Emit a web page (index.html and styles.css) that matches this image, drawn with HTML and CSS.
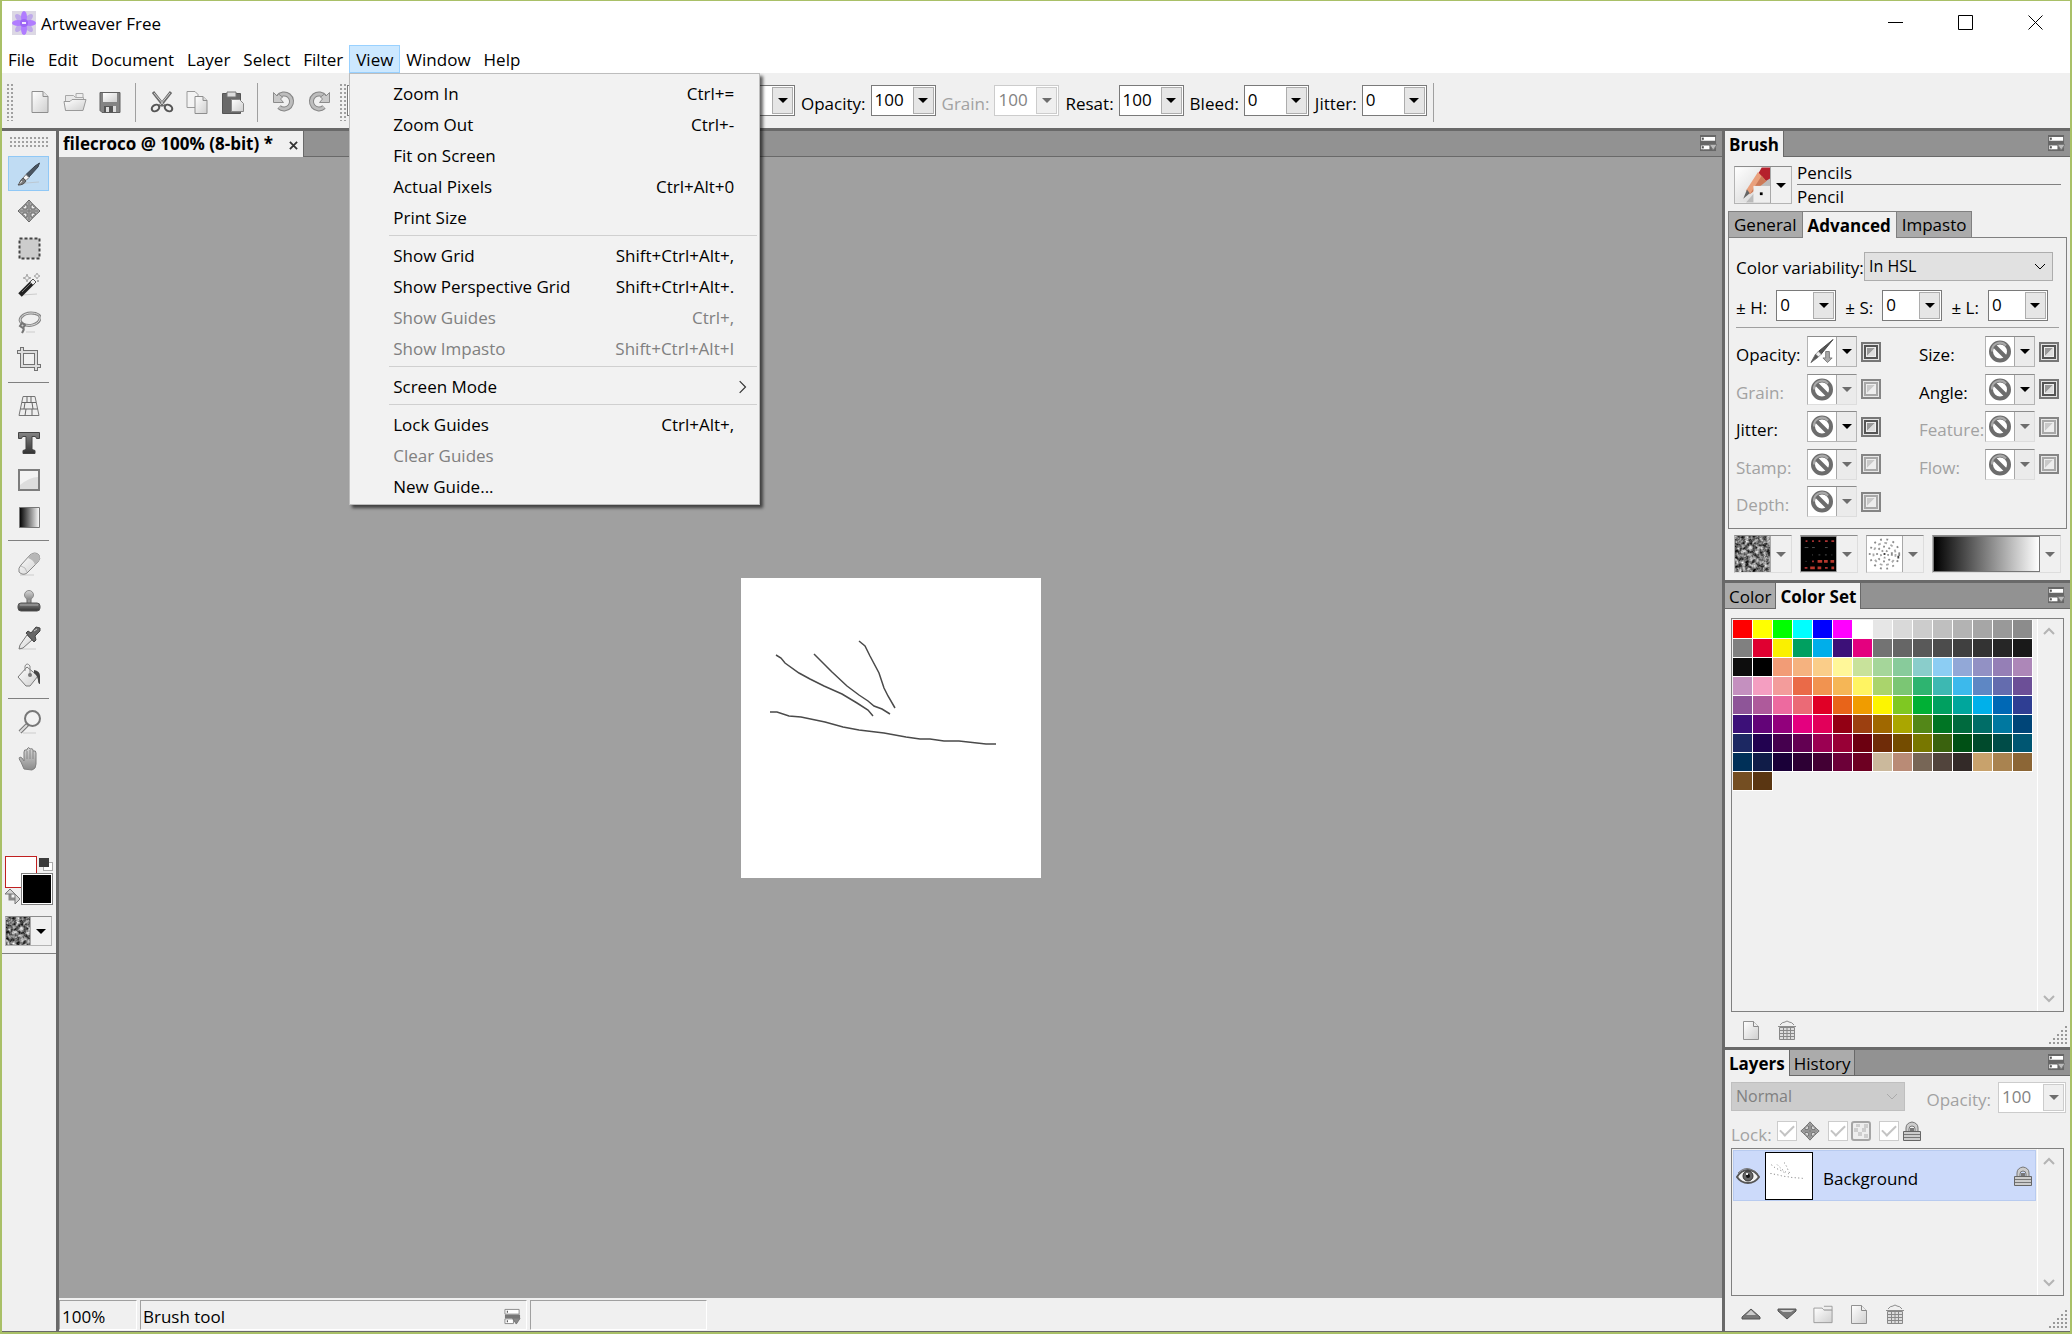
FILE: index.html
```html
<!DOCTYPE html>
<html lang="en">
<head>
    <meta charset="UTF-8">
    <meta name="viewport" content="width=device-width, initial-scale=1.0">
    <title>Artweaver Free</title>
    <link rel="stylesheet" href="styles.css">
</head>
<body>

    <!-- Shared icons -->
    <svg class="defs" aria-hidden="true">
        <defs>
            <linearGradient id="light" x1="0" y1="0" x2="1" y2="1"><stop offset="0" stop-color="#fff"/><stop offset="1" stop-color="#cfcfcf"/></linearGradient>
            <linearGradient id="mid" x1="0" y1="0" x2="0" y2="1"><stop offset="0" stop-color="#d8d8d8"/><stop offset="1" stop-color="#8a8a8a"/></linearGradient>
            <linearGradient id="dark" x1="0" y1="0" x2="0" y2="1"><stop offset="0" stop-color="#858585"/><stop offset="1" stop-color="#333"/></linearGradient>
            <linearGradient id="ramp"><stop offset="0" stop-color="#000"/><stop offset="1" stop-color="#fff"/></linearGradient>
            <filter id="noise" x="0" y="0" width="1" height="1" color-interpolation-filters="sRGB">
                <feTurbulence type="fractalNoise" baseFrequency="0.28" numOctaves="3" seed="4"/>
                <feColorMatrix values="1.4 0 0 0 -0.23  1.4 0 0 0 -0.23  1.4 0 0 0 -0.23  0 0 0 0 1"/>
            </filter>
        </defs>
        <symbol id="i-new" viewBox="0 0 24 24">
            <path d="M4 1.5h11l5 5v16H4z" fill="url(#light)" stroke="#8e8e8e"/>
            <path d="M15 1.5v5h5" fill="#e2e2e2" stroke="#8e8e8e"/>
        </symbol>
        <symbol id="i-open" viewBox="0 0 24 24">
            <path d="M2.500 20.500v-15h8l2 2h8v4" fill="#e8e8e8" stroke="#a8a8a8"/>
            <path d="M13 3.500h7v4h-7z" fill="#eee" stroke="#aaa"/>
            <path d="M1 11.500h6l2-2h14l-3 11H2.500z" fill="url(#light)" stroke="#9a9a9a"/>
        </symbol>
        <symbol id="i-save" viewBox="0 0 24 24">
            <path d="M2 2.500h20v20H4l-2-2z" fill="#848484" stroke="#606060"/>
            <path d="M5 3h14v9H5z" fill="url(#light)"/>
            <path d="M6 16h12v6.500H6z" fill="#555"/>
            <path d="M8 17h3v5H8zM15 16h3v6h-3z" fill="#ddd"/>
        </symbol>
        <symbol id="i-cut" viewBox="0 0 24 24">
            <path d="M3 2l11 14M21 2L10 16" stroke="#6b6b6b" stroke-width="3"/>
            <path d="M4 3l10 12M20 3L10 15" stroke="#d0d0d0"/>
            <ellipse cx="5.500" cy="18" rx="4" ry="3" transform="rotate(-30 5.500 18)" fill="#eee" stroke="#555" stroke-width="2"/>
            <ellipse cx="18.500" cy="18" rx="4" ry="3" transform="rotate(30 18.500 18)" fill="#eee" stroke="#555" stroke-width="2"/>
        </symbol>
        <symbol id="i-copy" viewBox="0 0 24 24">
            <path d="M2 1.500h8l3 3v13H2z" fill="#f4f4f4" stroke="#9a9a9a"/>
            <path d="M10 6.500h8l4 4v13H10z" fill="url(#light)" stroke="#8e8e8e"/>
            <path d="M18 6.500v4h4" fill="#ddd" stroke="#8e8e8e"/>
        </symbol>
        <symbol id="i-paste" viewBox="0 0 24 24">
            <path d="M2.500 3.500h18v20h-18z" fill="#696969" stroke="#555"/>
            <path d="M7 2h9v5H7z" fill="#ddd" stroke="#777"/>
            <path d="M11.500 9.500h8l4 4v8h-12z" fill="url(#light)" stroke="#888"/>
        </symbol>
        <symbol id="i-undo" viewBox="0 0 24 24">
            <path d="M6 7a7.500 7.500 0 1 1 1 10" fill="none" stroke="#858585" stroke-width="5"/>
            <path d="M6 7a7.500 7.500 0 1 1 1 10" fill="none" stroke="#bdbdbd" stroke-width="3"/>
            <path d="M1.500 2.500v10h10l-3-3.500 2-2-4-3-1.500 2z" fill="#c9c9c9" stroke="#8b8b8b"/>
        </symbol>
        <symbol id="i-brush" viewBox="0 0 24 24">
            <path d="M2 23l7-2 13-1" stroke="#bcc8d2" fill="none"/>
            <path d="M22.500 1L21 5 12 15l-3-2.500L18 4z" fill="#4a5560" stroke="#384450"/>
            <path d="M9 12.500l3 3-3 3-3-2.500z" fill="#f8f8f8" stroke="#777"/>
            <path d="M6 16l3 3c-2 3-4 4-8 4 2-2 2-5 5-7z" fill="#777" stroke="#555"/>
            <path d="M5 19l-2 2.500" stroke="#eee"/>
        </symbol>
        <symbol id="i-move" viewBox="0 0 24 24">
            <path d="M12 1l4.500 5h-2.500v4h4V7.500l5 4.500-5 4.500V14h-4v4h2.500L12 23l-4.500-5H10v-4H6v2.500L1 12l5-4.500V10h4V6H7.500z" fill="#aaa" stroke="#626262"/>
            <path d="M6 6h2v2H6zM16 6h2v2h-2zM6 16h2v2H6zM16 16h2v2h-2z" fill="#898989"/>
            <path d="M12 3v18M3 12h18" stroke="#777"/>
        </symbol>
        <symbol id="i-marquee" viewBox="0 0 24 24">
            <path d="M2.500 2.500h20v20h-20z" fill="#ccc" stroke="#444" stroke-width="2" stroke-dasharray="3 2"/>
        </symbol>
        <symbol id="i-wand" viewBox="0 0 24 24">
            <path d="M5 22l15-1" stroke="#ccc"/>
            <path d="M3 22L16 9" stroke="#222" stroke-width="5"/>
            <path d="M13 9l3 3 3-3-3-3z" fill="#eee" stroke="#555"/>
            <path d="M5 19L14 10" stroke="#777"/>
            <path d="M10 1l1 3 3 1-3 1-1 3-1-3-3-1 3-1zM20 0l1 2 2 1-2 1-1 2-1-2-2-1 2-1zM21 7l1 1-1 1-1-1z" fill="#eee" stroke="#aaa"/>
        </symbol>
        <symbol id="i-lasso" viewBox="0 0 24 24">
            <path d="M6 14C-1 10 6 3 14 3c7 0 10 3 9 6-2 6-11 8-17 5z" fill="none" stroke="#868686" stroke-width="3"/>
            <path d="M6 14C-1 10 6 3 14 3c7 0 10 3 9 6-2 6-11 8-17 5z" fill="none" stroke="#ddd"/>
            <path d="M5 13l-2 3 3 2 2-3zM6 17c2 3 0 4-1 6" fill="#ccc" stroke="#777" stroke-width="2"/>
            <path d="M9 22h9" stroke="#ccc"/>
        </symbol>
        <symbol id="i-crop" viewBox="0 0 24 24">
            <path d="M0 5h19v19M5 0v19h19" fill="none" stroke="#727272" stroke-width="4"/>
            <path d="M1 5h18v18M5 1v18h18" fill="none" stroke="#ddd" stroke-width="2"/>
        </symbol>
        <symbol id="i-persp" viewBox="0 0 24 24">
            <path d="M6 2.500h12l4 19H2z" fill="#eee" stroke="#777"/>
            <path d="M5 8.500h14M3.500 15h17M10 2.500v6M14 2.500v6M8 8.500L7 15M15 8.500l1 6.500M9 15l-1 6.500M15 15v6.500" stroke="#666" fill="none"/>
        </symbol>
        <symbol id="i-type" viewBox="0 0 24 24">
            <path d="M1.500 1.500h21v6h-3l-1-2H15v13l3 1v3H6v-3l3-1v-13H5.500l-1 2h-3z" fill="url(#dark)" stroke="#444"/>
        </symbol>
        <symbol id="i-shape" viewBox="0 0 24 24">
            <path d="M2 2h20v20H2z" fill="#f3f3f3" stroke="#7d7d7d" stroke-width="2"/>
            <path d="M3 17q10-8 18-8v12H3z" fill="#ddd"/>
        </symbol>
        <symbol id="i-gradient" viewBox="0 0 24 24">
            <path d="M2.500 2.500h20v20h-20z" fill="url(#ramp)" stroke="#777"/>
        </symbol>
        <symbol id="i-eraser" viewBox="0 0 24 24">
            <path d="M3 23h14" stroke="#ccc"/>
            <path d="M13 3q5-4 9 0 2 4-1 7L10 21q-4 3-8-1-1-4 2-7z" fill="url(#light)" stroke="#888"/>
            <path d="M12 4q6-5 10-1 2 4-1 7l-3 3q-1-5-7-7z" fill="#b7b7b7"/>
            <path d="M4 14q5 1 6 6" stroke="#bbb" fill="none"/>
        </symbol>
        <symbol id="i-stamp" viewBox="0 0 24 24">
            <path d="M10 9h4v7h-4z" fill="#999" stroke="#666"/>
            <circle cx="12" cy="6" r="4.500" fill="url(#mid)" stroke="#8d8d8d"/>
            <rect x="1" y="14" width="22" height="8" rx="3" fill="url(#dark)" stroke="#555"/>
            <path d="M3 16h18" stroke="#aaa"/>
        </symbol>
        <symbol id="i-dropper" viewBox="0 0 24 24">
            <path d="M3 23h16" stroke="#ccc"/>
            <path d="M10 9l5 5-9 8-4 1 1-4z" fill="url(#light)" stroke="#777"/>
            <path d="M9 7l2-2 3 2 5-6 4 1v3l-5 5 1 4-2 2z" fill="#666" stroke="#444"/>
            <path d="M17 5l3-2" stroke="#ccc"/>
        </symbol>
        <symbol id="i-bucket" viewBox="0 0 24 24">
            <path d="M10 4l11 9-8 10h-4l-8-9z" fill="url(#light)" stroke="#7a7a7a"/>
            <path d="M8 8V3q2-4 5 0v9" fill="none" stroke="#888"/>
            <path d="M17 7q6 1 6 6v8q-2 0-2-4-1-5-4-7z" fill="#444"/>
            <circle cx="13" cy="12" r="2" fill="#777"/>
        </symbol>
        <symbol id="i-zoom" viewBox="0 0 24 24">
            <path d="M6 23h13" stroke="#ccc"/>
            <path d="M3 22l8-8" stroke="#777" stroke-width="4"/>
            <path d="M3 22l7-7" stroke="#ddd" stroke-width="2"/>
            <circle cx="15.500" cy="8.500" r="7.500" fill="#f2f2f2" stroke="#777" stroke-width="2"/>
        </symbol>
        <symbol id="i-hand" viewBox="0 0 24 24">
            <path d="M7 22L4 15q-3-4-1-5 2 0 4 4V5q0-3 3-2v-1q2-3 3 0 3-1 3 1v1q3-1 3 2v11q0 5-4 6z" fill="url(#mid)" stroke="#7f7f7f"/>
            <path d="M10 4v8M13 3v9M16 4v8" stroke="#888"/>
        </symbol>
        <symbol id="i-swap" viewBox="0 0 16 16">
            <path d="M5 3v7h6" fill="none" stroke="#888" stroke-width="3"/>
            <path d="M0 5l5-5 5 5zM10 5v10l5-5z" fill="#d2d2d2" stroke="#777"/>
        </symbol>
        <symbol id="i-options" viewBox="0 0 18 18">
            <path d="M0 0h17v17H0z" fill="#676767"/>
            <path d="M3 2h13v4H3zM3 11h7v4H3z" fill="#fff"/>
            <path d="M1 2h3v4H1zM1 11h3v4H1z" fill="#ddd"/>
            <path d="M2 3h2v2H2zM2 12h2v2H2z" fill="#555"/>
            <path d="M10 10h8l-4 6z" fill="#bbb" stroke="#777"/>
        </symbol>
        <symbol id="i-options-flat" viewBox="0 0 18 18">
            <path d="M1 1.500h15v5H1zM1 11.500h9v5H1z" fill="#fff" stroke="#888"/>
            <path d="M1 7h16v4H1z" fill="#777"/>
            <path d="M3 3h1v2H3zM3 13h1v2H3z" fill="#333"/>
            <path d="M9 11h8l-4 6z" fill="#888" stroke="#777"/>
        </symbol>
        <symbol id="i-none" viewBox="0 0 24 24">
            <circle cx="12" cy="12" r="9" fill="none" stroke="#6d6d6d" stroke-width="4"/>
            <path d="M6 6l12 12" stroke="#6d6d6d" stroke-width="4"/>
            <path d="M4 12a8 8 0 0 1 14-6" fill="none" stroke="#a8a8a8" stroke-width="2"/>
        </symbol>
        <symbol id="i-pressure" viewBox="0 0 26 26">
            <path d="M25 0L12 16l-3-3z" fill="#555" stroke="#444"/>
            <path d="M9 13l3 3-3 3-3-3z" fill="#eee" stroke="#999"/>
            <path d="M6 16l3 3-8 6z" fill="#555" stroke="#666"/>
            <path d="M17 13h4v7h3l-5 5-5-5h3z" fill="#aaa" stroke="#777"/>
        </symbol>
        <symbol id="i-invert" viewBox="0 0 20 20">
            <path d="M1 1h18v18H1z" fill="#e4e4e4" stroke="#777" stroke-width="2"/>
            <path d="M4 4h12v12H4z" fill="#eee" stroke="#555" stroke-width="2"/>
            <path d="M6 6h8l-8 8z" fill="#999"/>
            <path d="M14 6v8H6z" fill="#ddd"/>
        </symbol>
        <symbol id="i-invert-off" viewBox="0 0 20 20">
            <path d="M1 1h18v18H1z" fill="#e8e8e8" stroke="#858585" stroke-width="2"/>
            <path d="M4 4h12v12H4z" fill="#eee" stroke="#a8a8a8" stroke-width="2"/>
            <path d="M6 6h8l-8 8z" fill="#c9c9c9"/>
            <path d="M14 6v8H6z" fill="#eee"/>
        </symbol>
        <symbol id="i-page" viewBox="0 0 20 20">
            <path d="M2.500 1.500h10l5 5v13h-15z" fill="url(#light)" stroke="#929292"/>
            <path d="M12.500 1.500v5h5" fill="#eee" stroke="#888"/>
        </symbol>
        <symbol id="i-trash" viewBox="0 0 20 20">
            <path d="M2.500 7.500h15v12h-15z" fill="#ddd" stroke="#888"/>
            <path d="M1 6.500h18M3 5q2-3 5-3 2-2 4 0 3 0 5 3" fill="none" stroke="#8d8d8d"/>
            <path d="M2 10.500h16M2 13.500h16M2 16.500h16M6.500 7v12M10 7v12M13.500 7v12" stroke="#888"/>
        </symbol>
        <symbol id="i-folder" viewBox="0 0 22 20">
            <path d="M1 3.500h9l2 2h9v14H1z" fill="url(#light)" stroke="#979797"/>
            <path d="M12 1.500h9v4h-9" fill="#eee" stroke="#999"/>
        </symbol>
        <symbol id="i-lock" viewBox="0 0 20 20">
            <path d="M4 11V7q0-5 6-6 6 1 6 6v4h-3V8q0-3-3-3T7 8v3z" fill="#ccc" stroke="#777"/>
            <path d="M1.500 10.500h17v9h-17z" fill="#ccc" stroke="#666"/>
            <path d="M2 13.500h16M2 16.500h16" stroke="#777"/>
            <path d="M8 7h4v3H8z" fill="#777"/>
        </symbol>
        <symbol id="i-checker" viewBox="0 0 20 20">
            <rect x="1" y="1" width="18" height="18" rx="2" fill="#eee" stroke="#a5a5a5" stroke-width="2"/>
            <path d="M3 7h4v4H3zM7 11h4v4H7zM11 7h4v4h-4zM13 3h4v4h-4zM13 13h4v4h-4zM5 3h4v3H5z" fill="#cecece"/>
        </symbol>
        <symbol id="i-eye" viewBox="0 0 24 16">
            <path d="M1 9Q5 2 12 2t11 7q-4 6-11 6T1 9z" fill="#f4f4f4" stroke="#555" stroke-width="2"/>
            <circle cx="12" cy="8" r="5" fill="#666" stroke="#333"/>
            <circle cx="12" cy="8" r="2" fill="#111"/>
            <path d="M10 5h2v2h-2z" fill="#eee"/>
            <path d="M2 5Q8-1 14 1t8 5" fill="none" stroke="#777"/>
        </symbol>
        <symbol id="i-up" viewBox="0 0 20 12"><path d="M10 1l9 8v2H1V9z" fill="#777" stroke="#555"/><path d="M10 2l5 5H5z" fill="#ccc"/></symbol>
        <symbol id="i-down" viewBox="0 0 20 12"><path d="M1 1h18v2l-9 8-9-8z" fill="#777" stroke="#555"/><path d="M3 2h14l-3 2H6z" fill="#ccc"/></symbol>
        <symbol id="i-chev" viewBox="0 0 12 12"><path d="M1 3l5 5 5-5" fill="none" stroke="currentColor"/></symbol>
        <symbol id="i-scroll" viewBox="0 0 12 12"><path d="M1 8l5-5 5 5" fill="none" stroke="#b4b4b4" stroke-width="2"/></symbol>
        <symbol id="strokes" viewBox="0 0 300 300">
            <path d="M35 77l5 3 4 5 14 10 11 6 14 7 9 4 9 4 15 9 11 7 5 6"/>
            <path d="M73 76L77 80 85 88 91 94 106 108 118 117 127 123 133 128 141 131 149 136"/>
            <path d="M118 63l6 5 5 10 9 17 5 15 4 8 7 12"/>
            <path d="M29 134h7l12 4 12 1 24 5 18 5 16 3 25 3 22 4 14 2h10l14 2h15l18 2 9 1h10"/>
        </symbol>
    </svg>

    <!-- Title bar -->
    <header class="titlebar">
        <svg class="logo" viewBox="0 0 24 24">
            <path d="M0 0h24v24H0z" fill="#dcd8e4"/>
            <g fill="#a27cf0" opacity="0.500">
                <ellipse cx="12" cy="6" rx="3" ry="6" transform="rotate(45 12 12)"/><ellipse cx="12" cy="6" rx="3" ry="6" transform="rotate(135 12 12)"/>
                <ellipse cx="12" cy="6" rx="3" ry="6" transform="rotate(225 12 12)"/><ellipse cx="12" cy="6" rx="3" ry="6" transform="rotate(315 12 12)"/>
            </g>
            <g fill="#b07cff">
                <ellipse cx="12" cy="6" rx="3" ry="6"/><ellipse cx="12" cy="18" rx="3" ry="6"/>
                <ellipse cx="6" cy="12" rx="6" ry="3"/><ellipse cx="18" cy="12" rx="6" ry="3"/>
            </g>
            <circle cx="12" cy="12" r="4" fill="#9c66f5"/><path d="M10 11h4v2h-4z" fill="#f3e8ff"/>
        </svg>
        <h1>Artweaver Free</h1>
        <div class="window-buttons">
            <button aria-label="Minimize"><svg viewBox="0 0 16 16"><path d="M0 7.500h15" stroke="#000"/></svg></button>
            <button aria-label="Maximize"><svg viewBox="0 0 16 16"><path d="M.5.5h14v14H.5z" fill="none" stroke="#000"/></svg></button>
            <button aria-label="Close"><svg viewBox="0 0 16 16"><path d="M.5.5l14 14M14.500.5l-14 14" stroke="#000"/></svg></button>
        </div>
    </header>

    <!-- Menu bar -->
    <nav class="menubar">
        <a href="#">File</a>
        <a href="#">Edit</a>
        <a href="#">Document</a>
        <a href="#">Layer</a>
        <a href="#">Select</a>
        <a href="#">Filter</a>
        <div class="menu-open">
            <a href="#" class="active">View</a>
            <div class="menu">
                <button>Zoom In<span>Ctrl+=</span></button>
                <button>Zoom Out<span>Ctrl+-</span></button>
                <button>Fit on Screen</button>
                <button>Actual Pixels<span>Ctrl+Alt+0</span></button>
                <button>Print Size</button>
                <hr>
                <button>Show Grid<span>Shift+Ctrl+Alt+,</span></button>
                <button>Show Perspective Grid<span>Shift+Ctrl+Alt+.</span></button>
                <button disabled>Show Guides<span>Ctrl+,</span></button>
                <button disabled>Show Impasto<span>Shift+Ctrl+Alt+I</span></button>
                <hr>
                <button class="has-sub">Screen Mode<svg viewBox="0 0 12 12"><path d="M4 1l5 5-5 5" fill="none" stroke="#333"/></svg></button>
                <hr>
                <button>Lock Guides<span>Ctrl+Alt+,</span></button>
                <button disabled>Clear Guides</button>
                <button>New Guide...</button>
            </div>
        </div>
        <a href="#">Window</a>
        <a href="#">Help</a>
    </nav>

    <!-- Toolbar -->
    <div class="toolbar">
        <div class="grip"></div>
        <div class="toolbar-files">
            <button aria-label="New"><svg><use href="#i-new"/></svg></button>
            <button aria-label="Open"><svg><use href="#i-open"/></svg></button>
            <button aria-label="Save"><svg><use href="#i-save"/></svg></button>
            <i class="divider"></i>
            <button aria-label="Cut"><svg><use href="#i-cut"/></svg></button>
            <button aria-label="Copy"><svg><use href="#i-copy"/></svg></button>
            <button aria-label="Paste"><svg><use href="#i-paste"/></svg></button>
            <i class="divider"></i>
            <button aria-label="Undo"><svg><use href="#i-undo"/></svg></button>
            <button aria-label="Redo"><svg class="flip"><use href="#i-undo"/></svg></button>
        </div>
        <div class="grip"></div>
        <div class="toolbar-options">
            <div class="combo size"><input type="text" aria-label="Size"><button aria-label="Open size"></button></div>
            <label for="opt-opacity">Opacity:</label>
            <div class="combo"><input type="text" id="opt-opacity" value="100"><button aria-label="Open opacity"></button></div>
            <label for="opt-grain" class="off">Grain:</label>
            <div class="combo off"><input type="text" id="opt-grain" value="100" disabled><button aria-label="Open grain" disabled></button></div>
            <label for="opt-resat">Resat:</label>
            <div class="combo"><input type="text" id="opt-resat" value="100"><button aria-label="Open resat"></button></div>
            <label for="opt-bleed">Bleed:</label>
            <div class="combo"><input type="text" id="opt-bleed" value="0"><button aria-label="Open bleed"></button></div>
            <label for="opt-jitter">Jitter:</label>
            <div class="combo"><input type="text" id="opt-jitter" value="0"><button aria-label="Open jitter"></button></div>
            <i class="divider"></i>
        </div>
    </div>

    <main class="workspace">
        <!-- Toolbox -->
        <aside class="toolbox">
            <div class="grip-h"></div>
            <button class="tool selected" aria-label="Brush"><svg><use href="#i-brush"/></svg></button>
            <button class="tool" aria-label="Move"><svg><use href="#i-move"/></svg></button>
            <button class="tool" aria-label="Selection"><svg><use href="#i-marquee"/></svg></button>
            <button class="tool" aria-label="Magic wand"><svg><use href="#i-wand"/></svg></button>
            <button class="tool" aria-label="Lasso"><svg><use href="#i-lasso"/></svg></button>
            <button class="tool" aria-label="Crop"><svg><use href="#i-crop"/></svg></button>
            <hr>
            <button class="tool" aria-label="Perspective grid"><svg><use href="#i-persp"/></svg></button>
            <button class="tool" aria-label="Text"><svg><use href="#i-type"/></svg></button>
            <button class="tool" aria-label="Shape"><svg><use href="#i-shape"/></svg></button>
            <button class="tool" aria-label="Gradient"><svg><use href="#i-gradient"/></svg></button>
            <hr>
            <button class="tool" aria-label="Eraser"><svg><use href="#i-eraser"/></svg></button>
            <button class="tool" aria-label="Stamp"><svg><use href="#i-stamp"/></svg></button>
            <button class="tool" aria-label="Pipette"><svg><use href="#i-dropper"/></svg></button>
            <button class="tool" aria-label="Fill"><svg><use href="#i-bucket"/></svg></button>
            <hr>
            <button class="tool" aria-label="Zoom"><svg><use href="#i-zoom"/></svg></button>
            <button class="tool" aria-label="Hand"><svg><use href="#i-hand"/></svg></button>
            <div class="colors">
                <button class="front" aria-label="Front color"></button>
                <button class="reset" aria-label="Reset colors"></button>
                <button class="swap" aria-label="Swap colors"><svg><use href="#i-swap"/></svg></button>
                <button class="back" aria-label="Back color"></button>
            </div>
            <button class="drop texture" aria-label="Paper"><svg><rect width="100%" height="100%" filter="url(#noise)"/></svg></button>
            <div class="toolbox-end"></div>
        </aside>

        <!-- Document -->
        <section class="document">
            <div class="tabs">
                <div class="tab current">filecroco @ 100% (8-bit) *<button class="close" aria-label="Close document"><svg viewBox="0 0 10 10"><path d="M1 1l8 8M9 1L1 9" stroke="#333" stroke-width="2"/></svg></button></div>
                <button class="options" aria-label="Document options"><svg><use href="#i-options"/></svg></button>
            </div>
            <div class="canvas-area">
                <svg class="canvas"><use href="#strokes"/></svg>
            </div>
            <footer class="status">
                <div class="zoom-level">100%</div>
                <div class="tool-name">Brush tool<svg><use href="#i-options-flat"/></svg></div>
                <div class="info"></div>
            </footer>
        </section>

        <aside class="panels">
            <!-- Brush -->
            <section class="panel">
                <div class="tabs">
                    <button class="tab current">Brush</button>
                    <button class="options" aria-label="Brush options"><svg><use href="#i-options"/></svg></button>
                </div>
                <div class="brush-head">
                    <button class="drop" aria-label="Choose brush">
                        <svg viewBox="0 0 38 38">
                            <path d="M0 0h38v38H0z" fill="url(#light)"/>
                            <path d="M12 38L38 8v30z" fill="#999" opacity="0.500"/>
                            <path d="M25 7l4-7h9v12l-5 3z" fill="#b5202c"/>
                            <path d="M25 5l9 10-18 14-4-4z" fill="#e9a07c"/>
                            <path d="M29 9l5 6-18 14z" fill="#cc7a58"/>
                            <path d="M13 24l3 4-7 6z" fill="#666"/>
                            <path d="M20 20h18v18H20z" fill="#eee"/>
                            <path d="M27 27h3v3h-3z" fill="#000"/>
                        </svg>
                    </button>
                    <div class="brush-names"><span>Pencils</span><span>Pencil</span></div>
                </div>
                <div class="subtabs">
                    <button class="tab">General</button>
                    <button class="tab current">Advanced</button>
                    <button class="tab">Impasto</button>
                </div>
                <div class="brush-page">
                    <div class="field">
                        <label for="variability">Color variability:</label>
                        <div class="select"><select id="variability"><option>In HSL</option></select><svg><use href="#i-chev"/></svg></div>
                    </div>
                    <div class="hsl">
                        <label for="var-h">± H:</label>
                        <div class="combo"><input type="text" id="var-h" value="0"><button aria-label="Open H"></button></div>
                        <label for="var-s">± S:</label>
                        <div class="combo"><input type="text" id="var-s" value="0"><button aria-label="Open S"></button></div>
                        <label for="var-l">± L:</label>
                        <div class="combo"><input type="text" id="var-l" value="0"><button aria-label="Open L"></button></div>
                    </div>
                    <hr>
                    <div class="dynamics">
                        <label for="dyn-opacity">Opacity:</label>
                        <button class="drop" id="dyn-opacity"><svg><use href="#i-pressure"/></svg></button>
                        <button class="invert" aria-label="Invert opacity"><svg><use href="#i-invert"/></svg></button>
                        <label for="dyn-size" class="second">Size:</label>
                        <button class="drop" id="dyn-size"><svg><use href="#i-none"/></svg></button>
                        <button class="invert" aria-label="Invert size"><svg><use href="#i-invert"/></svg></button>

                        <label for="dyn-grain" class="off">Grain:</label>
                        <button class="drop" id="dyn-grain" disabled><svg><use href="#i-none"/></svg></button>
                        <button class="invert" aria-label="Invert grain" disabled><svg><use href="#i-invert-off"/></svg></button>
                        <label for="dyn-angle" class="second">Angle:</label>
                        <button class="drop" id="dyn-angle"><svg><use href="#i-none"/></svg></button>
                        <button class="invert" aria-label="Invert angle"><svg><use href="#i-invert"/></svg></button>

                        <label for="dyn-jitter">Jitter:</label>
                        <button class="drop" id="dyn-jitter"><svg><use href="#i-none"/></svg></button>
                        <button class="invert" aria-label="Invert jitter"><svg><use href="#i-invert"/></svg></button>
                        <label for="dyn-feature" class="second off">Feature:</label>
                        <button class="drop" id="dyn-feature" disabled><svg><use href="#i-none"/></svg></button>
                        <button class="invert" aria-label="Invert feature" disabled><svg><use href="#i-invert-off"/></svg></button>

                        <label for="dyn-stamp" class="off">Stamp:</label>
                        <button class="drop" id="dyn-stamp" disabled><svg><use href="#i-none"/></svg></button>
                        <button class="invert" aria-label="Invert stamp" disabled><svg><use href="#i-invert-off"/></svg></button>
                        <label for="dyn-flow" class="second off">Flow:</label>
                        <button class="drop" id="dyn-flow" disabled><svg><use href="#i-none"/></svg></button>
                        <button class="invert" aria-label="Invert flow" disabled><svg><use href="#i-invert-off"/></svg></button>

                        <label for="dyn-depth" class="off">Depth:</label>
                        <button class="drop" id="dyn-depth" disabled><svg><use href="#i-none"/></svg></button>
                        <button class="invert" aria-label="Invert depth" disabled><svg><use href="#i-invert-off"/></svg></button>
                    </div>
                </div>
                <div class="brush-sources">
                    <button class="drop" aria-label="Paper" disabled><svg><rect width="100%" height="100%" filter="url(#noise)"/></svg></button>
                    <button class="drop" aria-label="Pattern" disabled>
                        <svg viewBox="0 0 38 38">
                            <path d="M0 0h38v38H0z"/>
                            <path d="M5 5h2M12 5h2M19 5h2M26 5h3M33 5h3M12 27h2M26 34h3M4 34h3" stroke="#a33" stroke-width="2"/>
                            <path d="M18 27h5M25 27h4M32 27h4M10 34h5M18 34h4M33 34h3" stroke="#b8372c" stroke-width="3"/>
                            <path d="M4 12h4M12 12h3M26 12h3M12 20h1M19 20h2M26 20h2M33 20h1M5 27h1" stroke="#555"/>
                        </svg>
                    </button>
                    <button class="drop" aria-label="Nozzle" disabled>
                        <svg viewBox="0 0 38 38">
                            <path d="M0 0h38v38H0z" fill="#fff"/>
                            <g fill="none" stroke="#8a8a8a" stroke-width="2">
                                <circle cx="19" cy="19" r="16" stroke-dasharray="2 5"/><circle cx="19" cy="19" r="12" stroke="#aaa" stroke-dasharray="3 4"/>
                                <circle cx="19" cy="19" r="8" stroke-dasharray="2 4"/><circle cx="19" cy="19" r="4" stroke="#999" stroke-dasharray="2 3"/>
                            </g>
                            <path d="M18 18h2v2h-2zM33 21h2v3h-2z" fill="#444"/>
                        </svg>
                    </button>
                    <button class="drop wide" aria-label="Gradient" disabled><svg><rect width="100%" height="100%" fill="url(#ramp)"/></svg></button>
                </div>
            </section>

            <!-- Color set -->
            <section class="panel grow">
                <div class="tabs">
                    <button class="tab">Color</button>
                    <button class="tab current">Color Set</button>
                    <button class="options" aria-label="Color options"><svg><use href="#i-options"/></svg></button>
                </div>
                <div class="listbox">
                    <div class="swatches" id="swatches"></div>
                    <div class="scroll"><svg><use href="#i-scroll"/></svg><svg class="turn"><use href="#i-scroll"/></svg></div>
                </div>
                <div class="panel-foot">
                    <button aria-label="New color"><svg><use href="#i-page"/></svg></button>
                    <button aria-label="Delete color"><svg><use href="#i-trash"/></svg></button>
                    <svg class="resize" viewBox="0 0 20 20"><path d="M1 18h18M5 14h14M9 10h10M13 6h6M17 2h2" stroke="#999" stroke-width="2" stroke-dasharray="2 2"/></svg>
                </div>
            </section>

            <!-- Layers -->
            <section class="panel">
                <div class="tabs">
                    <button class="tab current">Layers</button>
                    <button class="tab">History</button>
                    <button class="options" aria-label="Layer options"><svg><use href="#i-options"/></svg></button>
                </div>
                <div class="layer-mode">
                    <div class="select off"><select aria-label="Blend mode" disabled><option>Normal</option></select><svg><use href="#i-chev"/></svg></div>
                    <label for="layer-opacity" class="off">Opacity:</label>
                    <div class="combo off"><input type="text" id="layer-opacity" value="100" disabled><button aria-label="Open layer opacity" disabled></button></div>
                </div>
                <div class="layer-lock">
                    <span class="off">Lock:</span>
                    <label><input type="checkbox" aria-label="Lock position" checked disabled><svg><use href="#i-move"/></svg></label>
                    <label><input type="checkbox" aria-label="Lock transparency" checked disabled><svg><use href="#i-checker"/></svg></label>
                    <label><input type="checkbox" aria-label="Lock all" checked disabled><svg><use href="#i-lock"/></svg></label>
                </div>
                <div class="listbox layers">
                    <div class="layer">
                        <svg class="eye"><use href="#i-eye"/></svg>
                        <svg class="thumb"><use href="#strokes"/></svg>
                        <span>Background</span>
                        <svg class="lock"><use href="#i-lock"/></svg>
                    </div>
                    <div class="scroll"><svg><use href="#i-scroll"/></svg><svg class="turn"><use href="#i-scroll"/></svg></div>
                </div>
                <div class="panel-foot">
                    <button aria-label="Move up"><svg><use href="#i-up"/></svg></button>
                    <button aria-label="Move down"><svg><use href="#i-down"/></svg></button>
                    <button aria-label="New group"><svg><use href="#i-folder"/></svg></button>
                    <button aria-label="New layer"><svg><use href="#i-page"/></svg></button>
                    <button aria-label="Delete layer"><svg><use href="#i-trash"/></svg></button>
                    <svg class="resize" viewBox="0 0 20 20"><path d="M1 18h18M5 14h14M9 10h10M13 6h6M17 2h2" stroke="#999" stroke-width="2" stroke-dasharray="2 2"/></svg>
                </div>
            </section>
        </aside>
    </main>

    <script>
        const colors = [
            'ff0000 ffff00 00ff00 00ffff 0000ff ff00ff ffffff e6e6e6 d9d9d9 cccccc bfbfbf b3b3b3 a6a6a6 999999 8c8c8c',
            '808080 e00031 faf000 00a060 00aeea 3c1078 e4007f 737373 666666 595959 4c4c4c 404040 333333 262626 191919',
            '0d0d0d 000000 f29c76 f5b27f facd89 fff799 c8e29b a5d69a 88cb9b 8acdcb 8ccdf3 92a8d7 9291c4 957fb6 ad87b8',
            'c490bf f49ec1 f39c9b ea6a48 f19350 f5b656 fff462 aad46c 7bc674 2eb470 3db8b2 3cb9ec 5e87c4 646cae 6c4f97',
            '8e5598 ae5a9b ed6a9f eb6a76 e00026 e86419 f09c00 fdf500 7fc822 00b035 00a060 00a69c 00b0ea 0068b5 2f3e93',
            '3c1078 630478 92007c e4007f e2005a 930014 9c4010 a06800 aaa600 538718 007524 006a3e 006d67 0078a0 004578',
            '1c2862 220250 45004e 630052 9b0052 980036 6c0010 6f2c08 744c00 787700 3a620e 005015 004a2c 004c48 005672',
            '003058 101c48 1a0038 2d0034 430034 6c0038 6d0022 cbb99c b98b76 776656 51443c 332a28 c8a26c a98350 8c6636',
            '744e22 5a3612'
        ];

        const swatches = document.getElementById('swatches');
        colors.join(' ').split(' ').forEach(color => {
            swatches.innerHTML += `<button aria-label="#${color}" style="background-color: #${color}"></button>`;
        });
    </script>

</body>
</html>
```

FILE: styles.css
```css
* {
    box-sizing: border-box;
}

body {
    display: flex;
    flex-direction: column;
    height: 100vh;
    margin: 0;
    overflow: hidden;
    border: 2px solid #a9c067;
    border-top-width: 1px;
    background-color: #f0f0f0;
    color: #000;
    font-family: 'Open Sans', 'Noto Sans', sans-serif;
    font-size: 17px;
    line-height: 24px;
}

button, input, select {
    margin: 0;
    padding: 0;
    border: 0;
    border-radius: 0;
    background: none;
    color: inherit;
    font: inherit;
}

button {
    display: flex;
    align-items: center;
    justify-content: center;
}

svg {
    display: block;
    flex: none;
}

a {
    color: inherit;
    text-decoration: none;
}

hr {
    margin: 0;
    border: 0;
}

.defs {
    position: absolute;
    width: 0;
    height: 0;
}

.off {
    color: #a2a2a2;
}

/* Title bar */
.titlebar {
    display: flex;
    align-items: center;
    flex: none;
    height: 44px;
    padding-left: 10px;
    background-color: #fff;
}

.logo {
    width: 24px;
    height: 24px;
    margin-right: 5px;
}

.titlebar h1 {
    flex: 1;
    margin: 0;
    padding-top: 2px;
    font-size: 17px;
    font-weight: normal;
}

.window-buttons {
    display: flex;
}

.window-buttons button {
    width: 70px;
    height: 44px;
    padding-left: 2px;
}

.window-buttons svg {
    width: 16px;
    height: 16px;
}

/* Menu bar */
.menubar {
    display: flex;
    flex: none;
    height: 28px;
    background-color: #fff;
}

.menubar a {
    display: block;
    height: 28px;
    margin-left: -1px;
    padding: 3px 6px 0;
    border: 1px solid transparent;
    line-height: 22px;
}

.menubar a.active {
    border-color: #99d1ff;
    background-color: #cce8ff;
}

.menu-open {
    position: relative;
}

.menu {
    position: absolute;
    top: 100%;
    left: -1px;
    z-index: 10;
    width: 411px;
    padding: 4px 2px 2px;
    border: 1px solid #bdbdbd;
    background-color: #f2f2f2;
    box-shadow: 3px 3px 3px rgba(0, 0, 0, 0.6);
}

.menu button {
    justify-content: space-between;
    width: 100%;
    height: 31px;
    padding: 0 23px 0 41px;
}

.menu button:disabled {
    color: #808080;
}

.menu .has-sub {
    padding-right: 8px;
}

.menu .has-sub svg {
    width: 14px;
    height: 14px;
}

.menu hr {
    height: 1px;
    margin: 2px 0 4px 37px;
    background-color: #d0d0d0;
}

/* Toolbar */
.toolbar {
    display: flex;
    flex: none;
    height: 55px;
    padding: 10px 4px 7px;
}

.grip {
    width: 8px;
    height: 38px;
    background-image: radial-gradient(#a0a0a0 1px, transparent 1px);
    background-size: 4px 4px;
}

.toolbar-files {
    display: flex;
    align-items: center;
    width: 325px;
    padding-left: 8px;
}

.toolbar-files button {
    width: 35px;
    height: 38px;
}

.toolbar-files svg {
    width: 24px;
    height: 24px;
}

.flip {
    transform: scaleX(-1);
}

.divider {
    width: 1px;
    height: 39px;
    margin: 0 8px;
    background-color: #a0a0a0;
}

.toolbar-options {
    display: flex;
    flex: 1;
}

.toolbar-options label {
    padding: 9px 5px 0 6px;
}

.toolbar-options .divider {
    margin: 0 6px;
}

.combo {
    display: flex;
    flex: none;
    width: 65px;
    height: 31px;
    margin-top: 2px;
    padding: 1px;
    border: 1px solid #7a7a7a;
    background-color: #fff;
}

.combo.size {
    width: 448px;
}

.combo input {
    flex: 1;
    min-width: 0;
    padding: 0 0 2px 2px;
}

.combo button {
    width: 21px;
    border: 1px solid #adadad;
    background-color: #e6e6e6;
}

.combo button::before, .drop::after {
    content: "";
    border: 5px solid transparent;
    border-top-color: #000;
    border-bottom: 0;
}

.combo.off {
    border-color: #ccc;
}

.combo.off button {
    border-color: #ccc;
    background-color: #efefef;
}

.combo.off input {
    color: #838383;
}

.combo.off button::before, .drop:disabled::after {
    border-top-color: #6d6d6d;
}

.workspace {
    display: flex;
    flex: 1;
    min-height: 0;
    border-top: 3px solid #696969;
    border-bottom: 1px solid #696969;
}

/* Toolbox */
.toolbox {
    display: flex;
    flex-direction: column;
    gap: 2px;
    flex: none;
    width: 57px;
    border-right: 3px solid #696969;
}

.grip-h {
    height: 12px;
    margin: 5px 8px 6px 7px;
    background-image: radial-gradient(#a0a0a0 1px, transparent 1px);
    background-size: 4px 4px;
}

.tool {
    flex: none;
    width: 41px;
    height: 35px;
    margin-left: 6px;
    border: 1px solid transparent;
}

.tool.selected {
    border-color: #90c8f6;
    background-color: #c0dcf3;
}

.tool svg {
    width: 24px;
    height: 24px;
}

.toolbox hr {
    height: 1px;
    margin: 4px 7px 3px 6px;
    background-color: #808080;
}

/* Front and back color */
.colors {
    position: relative;
    width: 48px;
    height: 49px;
    margin: 78px 0 9px 3px;
}

.colors button {
    position: absolute;
}

.colors .front {
    top: 0;
    left: 0;
    width: 32px;
    height: 32px;
    border: 1px solid #c02020;
    background-color: #fff;
}

.colors .back {
    right: 0;
    bottom: 0;
    width: 32px;
    height: 32px;
    border: 1px solid #808080;
    outline: 1px solid #fff;
    outline-offset: -2px;
    background-color: #000;
}

.colors .reset {
    top: 2px;
    right: 4px;
    width: 10px;
    height: 9px;
    background-color: #3c3c3c;
    box-shadow: 4px 4px 0 -1px #fff, 4px 4px 0 #aaa;
}

.colors .swap {
    left: 0;
    bottom: 0;
}

.colors .swap svg {
    width: 16px;
    height: 16px;
}

.toolbox-end {
    height: 1px;
    margin-top: 5px;
    background-color: #808080;
}

/* Buttons with a picture and an arrow */
.drop {
    display: grid;
    grid-template-columns: 1fr 20px;
    align-items: stretch;
    width: 58px;
    height: 38px;
    border: 1px solid #b4b4b4;
    border-top-color: #8c8c8c;
}

.drop svg {
    width: 100%;
    height: 100%;
    border-right: 1px solid #a8a8a8;
}

.drop::after {
    align-self: center;
    justify-self: center;
}

.drop:disabled {
    border-right-color: #ddd;
    border-bottom-color: #ddd;
}

.drop.texture {
    width: 47px;
    height: 30px;
    margin-left: 3px;
}

/* Tabs */
.tabs {
    display: flex;
    flex: none;
    height: 26px;
    border-bottom: 1px solid #696969;
    background-color: #929292;
}

.tab {
    display: flex;
    height: 25px;
    padding: 2px 4px 0;
    border-right: 1px solid #696969;
    background-color: #ababab;
    line-height: 22px;
}

.tab.current {
    height: 26px;
    background-color: #f0f0f0;
    font-weight: bold;
}

.tab .close {
    margin: 0 1px 0 16px;
}

.tab .close svg {
    width: 9px;
    height: 9px;
}

.tabs .options {
    margin-left: auto;
    padding: 0 5px;
}

.tabs .options svg, .status svg {
    width: 17px;
    height: 17px;
}

/* Document */
.document {
    display: flex;
    flex-direction: column;
    flex: 1;
    min-width: 0;
}

.canvas-area {
    display: flex;
    align-items: center;
    justify-content: center;
    flex: 1;
    background-color: #a0a0a0;
}

.canvas {
    width: 300px;
    height: 300px;
    background-color: #fff;
    fill: none;
    stroke: #4a4a4a;
    stroke-width: 1.5px;
}

.status {
    display: flex;
    gap: 3px;
    flex: none;
    height: 33px;
    padding: 2px 0 1px;
}

.status div {
    display: flex;
    align-items: center;
    padding: 3px 5px 0 2px;
    border: 1px solid #fff;
    border-top-color: #a0a0a0;
    border-left-color: #a0a0a0;
}

.zoom-level {
    width: 78px;
}

.tool-name {
    justify-content: space-between;
    width: 387px;
}

.info {
    width: 177px;
}

/* Panels */
.panels {
    display: flex;
    flex-direction: column;
    gap: 3px;
    flex: none;
    width: 348px;
    border-left: 3px solid #696969;
    background-color: #696969;
}

.panel {
    display: flex;
    flex-direction: column;
    background-color: #f0f0f0;
}

.panel.grow {
    flex: 1;
    min-height: 0;
}

.brush-head {
    display: flex;
    gap: 5px;
    padding: 9px 9px 0;
}

.brush-names {
    flex: 1;
    margin-top: -4px;
}

.brush-names span {
    display: block;
    line-height: 24px;
}

.brush-names span:first-child {
    line-height: 22px;
    border-bottom: 1px solid #808080;
}

.subtabs {
    display: flex;
    margin: 2px 3px 0;
}

.subtabs .tab {
    height: 26px;
    padding: 1px 5px 0;
    border: 1px solid #808080;
    border-bottom: 0;
    border-left: 0;
}

.subtabs .tab:first-child {
    border-left: 1px solid #808080;
}

.subtabs .tab.current {
    height: 27px;
    margin-bottom: -1px;
    z-index: 1;
}

.brush-page {
    margin: 0 3px;
    padding: 14px 7px 11px;
    border: 1px solid #808080;
}

.field, .hsl {
    display: flex;
    justify-content: space-between;
}

.field {
    padding-right: 6px;
}

.field label {
    height: 24px;
    padding-top: 4px;
}

.select {
    display: grid;
    flex: none;
    width: 189px;
    height: 29px;
}

.select select, .select svg {
    grid-area: 1 / 1;
}

.select select {
    appearance: none;
    padding: 0 4px 2px;
    border: 1px solid #adadad;
    background-color: #e1e1e1;
    font-size: 16px;
    opacity: 1;
}

.select svg {
    align-self: center;
    justify-self: end;
    width: 12px;
    height: 12px;
    margin-right: 7px;
    pointer-events: none;
}

.select.off select {
    border-color: #bfbfbf;
    background-color: #ccc;
    color: #808080;
}

.hsl {
    padding: 9px 11px 6px 0;
}

.hsl label {
    height: 24px;
    padding-top: 6px;
}

.hsl .combo {
    width: 60px;
}

.hsl .combo, .layer-mode .combo {
    margin-top: 0;
}

.brush-page hr {
    height: 1px;
    background-color: #a0a0a0;
}

/* Brush dynamics */
.dynamics {
    display: grid;
    grid-template-columns: 67px 50px 20px 1fr 50px 20px;
    column-gap: 4px;
    align-content: space-between;
    height: 181px;
    margin-top: 8px;
}

.dynamics label {
    height: 31px;
    margin-right: -4px;
    padding-top: 7px;
}

.dynamics .second {
    padding-left: 34px;
}

.dynamics .drop {
    grid-template-columns: 1fr 19px;
    width: 50px;
    height: 31px;
    background-color: #ebebeb;
}

.dynamics .drop svg {
    padding: 2px;
    background-color: #fff;
}

.invert {
    align-self: center;
}

.invert svg {
    width: 20px;
    height: 20px;
}

.brush-sources {
    display: flex;
    gap: 8px;
    padding: 6px 9px 7px;
}

.brush-sources .wide {
    flex: 1;
}

.wide svg {
    border: 1px solid #777;
}

/* Lists */
.listbox {
    display: flex;
    flex: 1;
    margin: 9px 6px 0;
    border: 1px solid #808080;
}

.swatches {
    display: grid;
    grid-template-columns: repeat(15, 20px);
    grid-auto-rows: 19px;
    align-content: start;
    flex: 1;
    padding: 1px;
}

.swatches button {
    border: 1px solid #fff;
    border-top: 0;
    border-left: 0;
}

.scroll {
    display: flex;
    flex-direction: column;
    justify-content: space-between;
    width: 26px;
    padding: 7px 5px;
    border-left: 1px solid #fff;
}

.scroll svg {
    width: 12px;
    height: 12px;
}

.turn {
    transform: rotate(180deg);
}

.panel-foot {
    display: flex;
    align-items: center;
    gap: 16px;
    flex: none;
    height: 35px;
    padding: 0 2px 0 16px;
}

.panel-foot svg {
    width: 20px;
    height: 20px;
}

.panel-foot .resize {
    align-self: flex-end;
    margin: 0 0 2px auto;
}

/* Layers */
.layer-mode {
    display: flex;
    padding: 6px 4px 0 6px;
}

.layer-mode .select {
    width: 174px;
}

.layer-mode .select svg {
    color: #aaa;
}

.layer-mode label {
    flex: 1;
    padding: 7px 7px 0 0;
    line-height: 22px;
    text-align: right;
}

.layer-mode .combo {
    width: 68px;
}

.layer-lock {
    display: flex;
    gap: 8px;
    height: 35px;
    padding: 8px 6px 0;
}

.layer-lock span {
    padding-top: 2px;
    margin-right: -3px;
}

.layer-lock label {
    display: flex;
    gap: 3px;
}

.layer-lock svg {
    width: 20px;
    height: 20px;
}

.layer-lock input {
    appearance: none;
    display: grid;
    place-items: center;
    width: 20px;
    height: 20px;
    border: 1px solid #ccc;
    background-color: #fff;
}

.layer-lock input::before {
    content: "";
    width: 12px;
    height: 6px;
    margin-top: -4px;
    border: 2px solid #c4c4c4;
    border-top: 0;
    border-right: 0;
    transform: rotate(-45deg);
}

.listbox.layers {
    flex: none;
    height: 148px;
    margin-top: 0;
}

.layer {
    display: flex;
    align-items: center;
    flex: 1;
    height: 51px;
    margin: 1px;
    padding: 0 2px 0 2px;
    border: 1px solid #b8cbf0;
    background-color: #ccdafa;
}

.layer span {
    flex: 1;
    padding: 7px 0 0 10px;
}

.layer .eye {
    width: 24px;
    height: 16px;
    margin-right: 5px;
}

.layer .thumb {
    width: 48px;
    height: 48px;
    border: 1px solid #000;
    background-color: #fff;
    fill: none;
    stroke: #333;
    stroke-width: 4px;
    stroke-dasharray: 7 16;
}

.layer .lock {
    width: 20px;
    height: 20px;
}
```
